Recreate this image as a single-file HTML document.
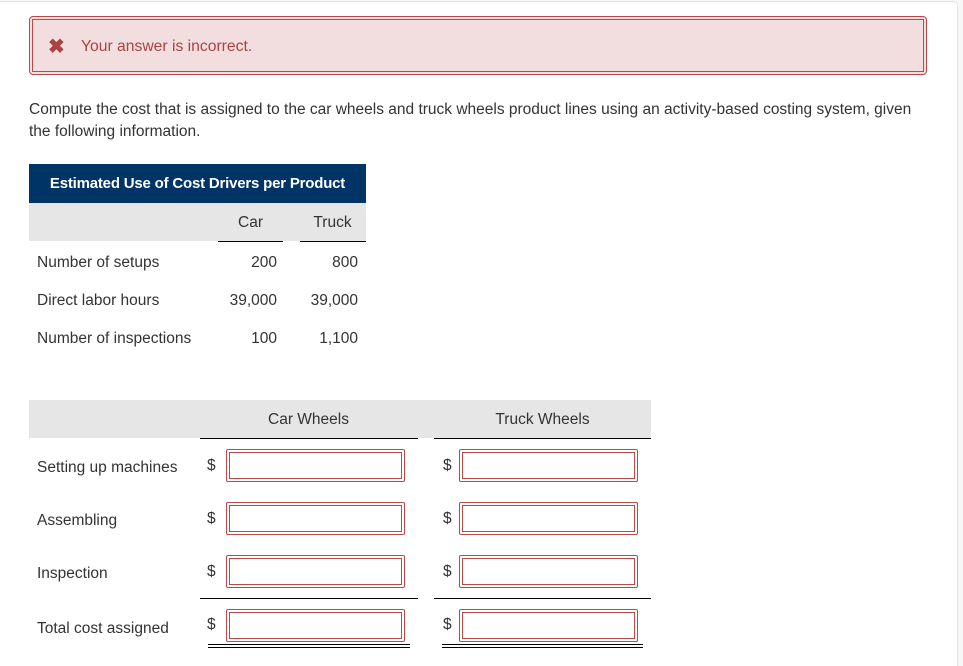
<!DOCTYPE html>
<html style="height:666px;overflow:hidden"><head><meta charset="utf-8"><style>
*{margin:0;padding:0;box-sizing:border-box}
body{width:963px;height:666px;background:#f7f7f7;font-family:"Liberation Sans",sans-serif;color:#333;position:relative;overflow:hidden}
.card{position:absolute;left:-10px;top:1px;width:968px;height:665px;background:#fff;border:1px solid #e2e2e2;border-bottom:none;border-radius:5px 5px 0 0}
.a{position:absolute;white-space:nowrap}
.alert{position:absolute;left:29px;top:16px;width:898px;height:59px;border:1px solid #b94a48;border-radius:4px;background:#f2dede}
.alert .in{position:absolute;left:2px;top:2px;right:2px;bottom:2px;border:1px solid #b94a48}
.t{font-size:15.5px}
.hl{position:absolute;height:1px;background:#000}
.box{position:absolute;width:179px;height:33px;border:1px solid #b94a48;border-radius:2px;background:#fff}
.box:after{content:"";position:absolute;left:2px;top:2px;right:2px;bottom:2px;border:1px solid #b94a48}
.d{position:absolute;font-size:15.5px;color:#333}
</style></head><body>
<div class="card"></div>
<div class="alert"><div class="in"></div></div>
<div class="a" style="left:48px;top:34px;font-size:20px;font-weight:bold;color:#a94442">✖</div>
<div class="a" style="left:81px;top:38px;color:#a94442;font-size:15.7px">Your answer is incorrect.</div>
<div class="a t" style="left:29px;top:101px">Compute the cost that is assigned to the car wheels and truck wheels product lines using an activity-based costing system, given</div>
<div class="a t" style="left:29px;top:123px">the following information.</div>
<div class="a" style="left:29px;top:164px;width:337px;height:39px;background:#003366;color:#fff;font-weight:bold;font-size:15px;text-align:center;line-height:39px;letter-spacing:-0.2px">Estimated Use of Cost Drivers per Product</div>
<div class="a" style="left:29px;top:203px;width:337px;height:38px;background:#e6e6e6"></div>
<div class="a t" style="left:218px;width:65px;top:214px;text-align:center">Car</div>
<div class="a t" style="left:300px;width:65px;top:214px;text-align:center">Truck</div>
<div class="hl" style="left:218px;width:65px;top:241px"></div>
<div class="hl" style="left:300px;width:66px;top:241px"></div>
<div class="a t" style="left:37px;top:254px">Number of setups</div>
<div class="a t" style="left:37px;top:292px">Direct labor hours</div>
<div class="a t" style="left:37px;top:330px">Number of inspections</div>
<div class="a t" style="right:686px;top:254px">200</div>
<div class="a t" style="right:605px;top:254px">800</div>
<div class="a t" style="right:686px;top:292px">39,000</div>
<div class="a t" style="right:605px;top:292px">39,000</div>
<div class="a t" style="right:686px;top:330px">100</div>
<div class="a t" style="right:605px;top:330px">1,100</div>

<div class="a" style="left:29px;top:400px;width:622px;height:38px;background:#e6e6e6"></div>
<div class="a t" style="left:200px;width:217px;top:411px;text-align:center">Car Wheels</div>
<div class="a t" style="left:434px;width:217px;top:411px;text-align:center">Truck Wheels</div>
<div class="hl" style="left:200px;width:218px;top:438px"></div>
<div class="hl" style="left:434px;width:217px;top:438px"></div>

<div class="a t" style="left:37px;top:459px">Setting up machines</div>
<div class="a t" style="left:37px;top:512px">Assembling</div>
<div class="a t" style="left:37px;top:565px">Inspection</div>
<div class="a t" style="left:37px;top:620px">Total cost assigned</div>

<div class="d" style="left:207px;top:457px">$</div><div class="box" style="left:226px;top:449px"></div>
<div class="d" style="left:443px;top:457px">$</div><div class="box" style="left:459px;top:449px"></div>
<div class="d" style="left:207px;top:510px">$</div><div class="box" style="left:226px;top:502px"></div>
<div class="d" style="left:443px;top:510px">$</div><div class="box" style="left:459px;top:502px"></div>
<div class="d" style="left:207px;top:563px">$</div><div class="box" style="left:226px;top:555px"></div>
<div class="d" style="left:443px;top:563px">$</div><div class="box" style="left:459px;top:555px"></div>
<div class="hl" style="left:200px;width:218px;top:598px"></div>
<div class="hl" style="left:434px;width:217px;top:598px"></div>
<div class="d" style="left:207px;top:616px">$</div><div class="box" style="left:226px;top:609px"></div>
<div class="d" style="left:443px;top:616px">$</div><div class="box" style="left:459px;top:609px"></div>
<div class="hl" style="left:208px;width:202px;top:644px"></div>
<div class="hl" style="left:208px;width:202px;top:647px"></div>
<div class="hl" style="left:442px;width:201px;top:644px"></div>
<div class="hl" style="left:442px;width:201px;top:647px"></div>
</body></html>
